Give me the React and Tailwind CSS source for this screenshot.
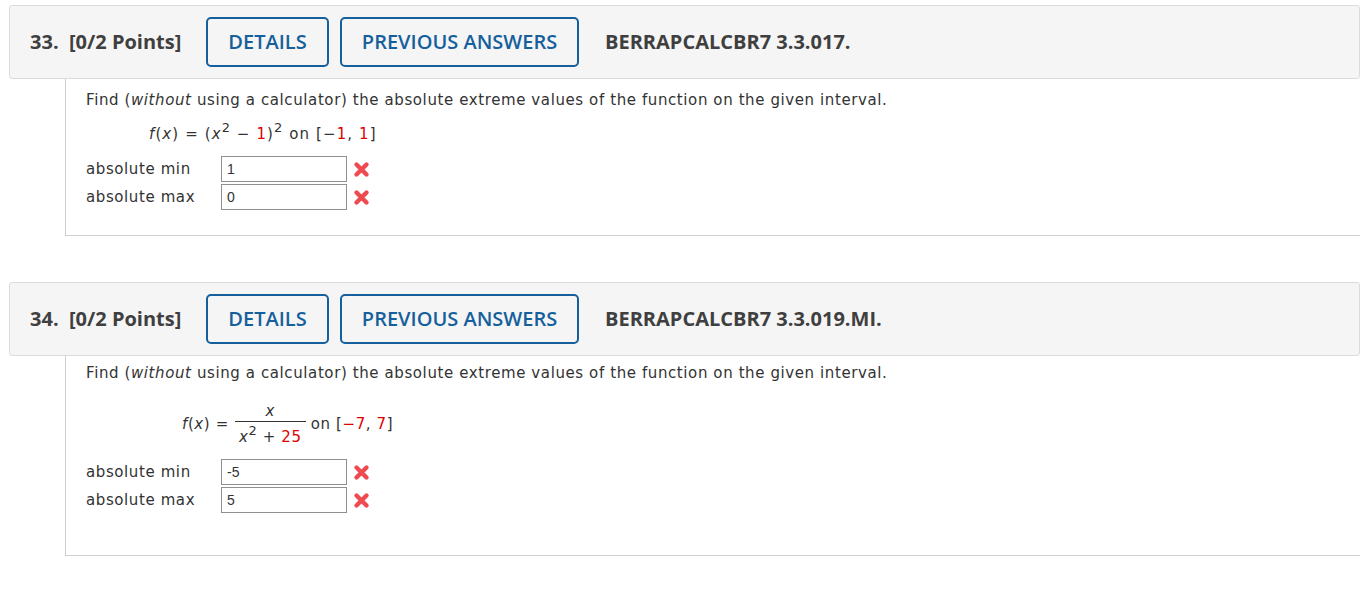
import React from 'react';

const body = { fontFamily: '"DejaVu Sans", Verdana, sans-serif' };
const head = { fontFamily: '"Open Sans", Arial, sans-serif' };

const WrongMark = () => (
  <svg width="19" height="19" viewBox="0 0 19 19" className="ml-[5px]">
    <path d="M4.5 4.5 L14.5 14.5 M14.5 4.5 L4.5 14.5" stroke="#ee4b50" strokeWidth="4.4" strokeLinecap="round" />
  </svg>
);

const Red = ({ children }) => <span className="text-[#e00000]">{children}</span>;

const Sup = ({ children }) => <sup className="text-[13px] relative -top-[7px]">{children}</sup>;

const AnswerRow = ({ label, value }) => (
  <div className="flex items-center h-[28px]">
    <div className="w-[135px] text-[15px] tracking-[0.6px] text-[#333]">{label}</div>
    <div
      className="w-[126px] h-[26px] border border-[#8f8f8f] bg-white px-[5px] flex items-center text-[14px] text-[#333]"
      style={{ fontFamily: '"Liberation Sans", Arial, sans-serif' }}
    >
      {value}
    </div>
    <WrongMark />
  </div>
);

const QuestionHeader = ({ num, code }) => (
  <div
    className="ml-[9px] h-[74px] border border-[#dcdcdc] rounded-[3px] bg-[#f5f5f5] flex items-center pl-[20px]"
    style={head}
  >
    <span className="text-[20px] font-bold text-[#3f3f3f] w-[176px] whitespace-pre">{num}.  [0/2 Points]</span>
    <button className="h-[50px] w-[123px] border-2 border-[#15609c] rounded-[5px] text-[#15609c] text-[20px] font-semibold bg-[#f5f5f5]">
      DETAILS
    </button>
    <button className="ml-[11px] h-[50px] w-[239px] border-2 border-[#15609c] rounded-[5px] text-[#15609c] text-[20px] font-semibold bg-[#f5f5f5]">
      PREVIOUS ANSWERS
    </button>
    <span className="ml-[26px] text-[20px] font-bold text-[#3f3f3f]">{code}</span>
  </div>
);

const Prompt = () => (
  <div className="text-[15px] tracking-[0.6px] text-[#333] leading-[20px]">
    Find (<i>without</i> using a calculator) the absolute extreme values of the function on the given interval.
  </div>
);

export default function App() {
  return (
    <div className="w-[1360px] h-[596px] bg-white overflow-hidden pt-[5px]" style={body}>
      {/* Question 33 */}
      <QuestionHeader num="33" code="BERRAPCALCBR7 3.3.017." />
      <div className="ml-[65px] h-[157px] border-l border-b border-[#cfcfcf] pl-[20px] pt-[11px]">
        <Prompt />
        <div className="mt-[12px] ml-[63px] text-[15px] tracking-[1.1px] text-[#333] leading-[24px] whitespace-nowrap">
          <i>f</i>(<i>x</i>) = (<i>x</i>
          <Sup>2</Sup> − <Red>1</Red>)<Sup>2</Sup> on [−<Red>1</Red>, <Red>1</Red>]
        </div>
        <div className="mt-[9px]">
          <AnswerRow label="absolute min" value="1" />
          <AnswerRow label="absolute max" value="0" />
        </div>
      </div>

      <div className="h-[46px]" />

      {/* Question 34 */}
      <QuestionHeader num="34" code="BERRAPCALCBR7 3.3.019.MI." />
      <div className="ml-[65px] h-[200px] border-l border-b border-[#cfcfcf] pl-[20px] pt-[7px]">
        <Prompt />
        <div className="mt-[15px] ml-[96px] text-[15px] tracking-[0.6px] text-[#333] flex items-center h-[52px]">
          <span className="whitespace-pre">
            <i>f</i>(<i>x</i>) = 
          </span>
          <span className="inline-flex flex-col items-center ml-[6px] mr-[5px]">
            <span className="leading-[20px]">
              <i>x</i>
            </span>
            <span className="w-[71px] border-t border-[#333]" />
            <span className="leading-[20px] pt-[5px] whitespace-nowrap">
              <i>x</i>
              <Sup>2</Sup> + <Red>25</Red>
            </span>
          </span>
          <span className="whitespace-pre">on [<Red>−7</Red>, <Red>7</Red>]</span>
        </div>
        <div className="mt-[8px]">
          <AnswerRow label="absolute min" value="-5" />
          <AnswerRow label="absolute max" value="5" />
        </div>
      </div>
    </div>
  );
}
